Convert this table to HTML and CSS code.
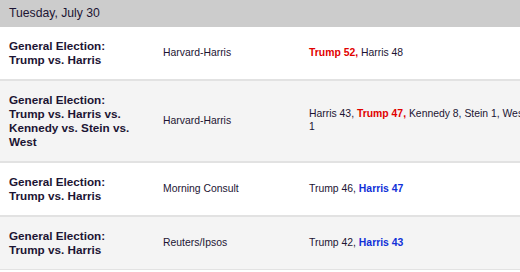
FILE: index.html
```html
<!DOCTYPE html>
<html>
<head>
<meta charset="utf-8">
<link rel="stylesheet" href="styles.css">
</head>
<body>
<div class="frame">
  <table class="polls">
    <colgroup>
      <col class="c-race">
      <col class="c-poll">
      <col class="c-res">
    </colgroup>
    <thead>
      <tr><th colspan="3" class="date">Tuesday, July 30</th></tr>
    </thead>
    <tbody>
      <tr>
        <td class="race">General Election:<br>Trump vs. Harris</td>
        <td class="poll">Harvard-Harris</td>
        <td class="res"><b class="rep">Trump 52,</b> Harris 48</td>
      </tr>
      <tr class="alt">
        <td class="race">General Election: Trump vs. Harris vs. Kennedy vs. Stein vs. West</td>
        <td class="poll">Harvard-Harris</td>
        <td class="res">Harris 43, <b class="rep">Trump 47,</b> Kennedy 8, Stein 1, West 1</td>
      </tr>
      <tr>
        <td class="race">General Election:<br>Trump vs. Harris</td>
        <td class="poll">Morning Consult</td>
        <td class="res">Trump 46, <b class="dem">Harris 47</b></td>
      </tr>
      <tr class="alt">
        <td class="race">General Election:<br>Trump vs. Harris</td>
        <td class="poll">Reuters/Ipsos</td>
        <td class="res">Trump 42, <b class="dem">Harris 43</b></td>
      </tr>
    </tbody>
  </table>
</div>
</body>
</html>
```
FILE: styles.css
```css
html, body {
  margin: 0;
  padding: 0;
  background: #fff;
}
.frame {
  width: 520px;
  overflow: hidden;
}
.polls {
  width: 543px;
  border-collapse: collapse;
  table-layout: fixed;
  font-family: "Liberation Sans", Arial, sans-serif;
  color: #1c1433;
}
.c-race { width: 150px; }
.c-poll { width: 150px; }
.c-res { width: 243px; }
.date {
  background: #cccccc;
  text-align: left;
  font-weight: normal;
  font-size: 12.2px;
  line-height: 14px;
  height: 27px;
  box-sizing: border-box;
  padding: 6px 9px 7px;
}
.polls td {
  vertical-align: middle;
  border-bottom: 2px solid #e2e2e2;
}
.polls tbody tr:last-child td {
  border-bottom-width: 1px;
}
.alt td {
  background: #f4f4f4;
}
.race {
  font-weight: bold;
  font-size: 11.7px;
  line-height: 14px;
  padding: 12px 9px 12px 9px;
}
.poll {
  font-size: 10.4px;
  line-height: 12.6px;
  padding: 0 8px 0 13px;
}
.res {
  font-size: 10.4px;
  line-height: 12.6px;
  padding: 0 9px;
}
.rep { color: #e10000; }
.dem { color: #1030d8; }
```
